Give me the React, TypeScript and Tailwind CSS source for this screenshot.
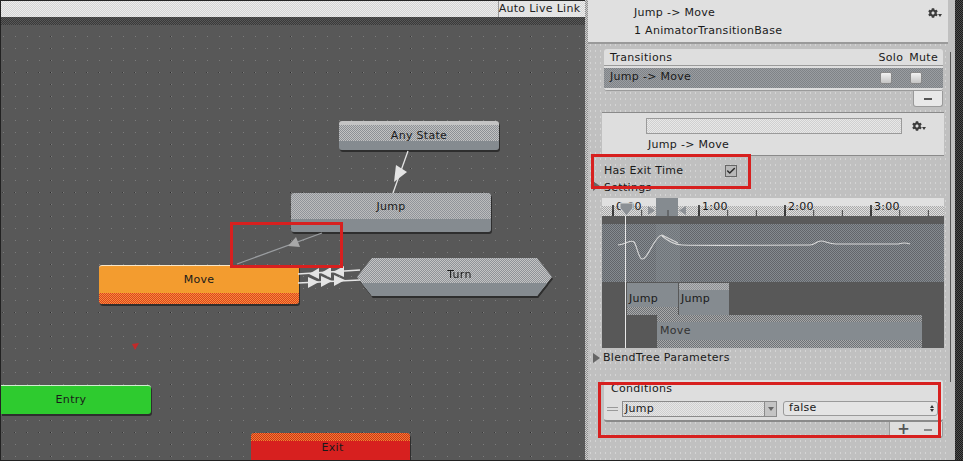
import { FaCog } from "react-icons/fa";
import { Check } from "lucide-react";

const panelDots =
  "bg-[radial-gradient(#f2f2f2_0.6px,transparent_0.7px)] bg-size-[4px_4px]";
const bodyDots =
  "bg-[radial-gradient(#d4d4d4_0.6px,transparent_0.7px)] bg-size-[5px_6px]";

function Gear() {
  return (
    <span className="flex items-end text-[#3c3c3c]">
      <FaCog size={10} />
      <span className="mb-px h-0 w-0 border-x-[2px] border-t-[3px] border-x-transparent border-t-[#3c3c3c]" />
    </span>
  );
}

function SmallCheck() {
  return (
    <span className="block h-3 w-3 rounded-[2px] border border-[#8a8a8a] bg-[linear-gradient(#f2f2f2,#c4c4c4)]" />
  );
}

function StateNode({
  label,
  className,
}: {
  label: string;
  className: string;
}) {
  return (
    <div
      className={`absolute flex items-center justify-center rounded-[3px] shadow-[1px_2px_0_#2e2e2e] ${className}`}
    >
      {label}
    </div>
  );
}

function GraphCanvas() {
  return (
    <div className="relative h-[461px] w-[585px] shrink-0 overflow-hidden border-l border-t border-[#222] bg-[#585858] text-[11px] tracking-[0.3px] text-[#1a1a1a]">
      <div className="flex h-[16px] justify-end bg-[repeating-conic-gradient(#d4d4d4_0_25%,#ececec_0_50%)] bg-size-[2px_2px] pr-[5px]">
        <div className="flex w-[82px] items-center justify-center whitespace-nowrap border-l border-[#9a9a9a] bg-[#e4e4e4] text-[#222]">
          Auto Live Link
        </div>
      </div>
      <div className="h-2 bg-[repeating-conic-gradient(#3a3a3a_0_25%,#585858_0_50%)] bg-size-[2px_2px]" />

      {/* grid */}
      <svg className="absolute -left-px -top-px" width="586" height="462">
        <defs>
          <pattern id="minor" x="3" y="0" width="12" height="12" patternUnits="userSpaceOnUse">
            <rect width="1" height="1" fill="#7c7c7c" />
          </pattern>
          <pattern id="major" x="50" y="72" width="120" height="120" patternUnits="userSpaceOnUse">
            <line x1="0" y1="0" x2="0" y2="120" stroke="#1c1c1c" strokeDasharray="1 11" />
            <line x1="0" y1="0" x2="120" y2="0" stroke="#1c1c1c" strokeDasharray="1 11" />
          </pattern>
        </defs>
        <rect y="25" width="586" height="437" fill="url(#minor)" />
        <rect y="25" width="586" height="437" fill="url(#major)" />
      </svg>

      <StateNode
        label="Any State"
        className="left-[338px] top-[120px] h-[29px] w-[160px] bg-[linear-gradient(#c4c4c4_0_4px,transparent_4px_20px,#858b90_20px),repeating-conic-gradient(#c2c2c2_0_25%,#8c9095_0_50%)] bg-size-[100%_100%,2px_2px] pt-[2px]"
      />
      <StateNode
        label="Jump"
        className="left-[290px] top-[192px] h-[39px] w-[200px] bg-[linear-gradient(transparent_0_26px,#858b90_26px),repeating-conic-gradient(#bcbcbc_0_25%,#90949a_0_50%)] bg-size-[100%_100%,2px_2px] pb-[10px]"
      />
      <StateNode
        label="Move"
        className="left-[98px] top-[264px] h-[39px] w-[200px] border-t border-[#f8e6c8] bg-[linear-gradient(#f39c2f_0_27px,transparent_27px),repeating-conic-gradient(#f39c2f_0_25%,#e0342a_0_50%)] bg-size-[100%_100%,2px_2px] pb-[9px]"
      />
      <StateNode
        label="Entry"
        className="left-0 top-[384px] h-[29px] w-[150px] rounded-l-none border-t border-[#cfeecf] bg-[#2ecb2f] pr-[10px]"
      />
      <StateNode
        label="Exit"
        className="left-[250px] top-[432px] h-[28px] w-[159px] rounded-b-none bg-[linear-gradient(transparent_0_8px,#d7201f_8px),repeating-conic-gradient(#e8902a_0_25%,#d7201f_0_50%)] bg-size-[100%_100%,2px_2px] pl-1 pt-[2px]"
      />
      <div className="absolute left-[356px] top-[257px] h-[38px] w-[195px] drop-shadow-[1px_2px_0_#2e2e2e]">
        <div className="flex h-full items-center justify-center bg-[linear-gradient(transparent_0_25px,#858b90_25px),repeating-conic-gradient(#c4c4c4_0_25%,#8f9398_0_50%)] bg-size-[100%_100%,2px_2px] pb-[3px] pl-[10px] [clip-path:polygon(0_50%,15px_0,calc(100%-15px)_0,100%_50%,calc(100%-15px)_100%,15px_100%)]">
          Turn
        </div>
      </div>

      {/* transitions */}
      <svg className="absolute -left-px -top-px" width="586" height="462">
        <line x1="408" y1="151" x2="393" y2="193" stroke="#e4e4e4" strokeWidth="1.3" />
        <polygon points="396,165 407,172 394,182" fill="#e4e4e4" />
        <line x1="322" y1="233" x2="237" y2="264" stroke="#9a9da0" strokeWidth="1.3" />
        <polygon points="296,237 300,247 288,246" fill="#a8a8a8" />
        <line x1="298" y1="274" x2="360" y2="270" stroke="#e4e4e4" strokeWidth="1.3" />
        <line x1="298" y1="283" x2="360" y2="280" stroke="#e4e4e4" strokeWidth="1.3" />
        <polygon points="309,274 319,268 319,279" fill="#e4e4e4" />
        <polygon points="321,273 331,267 331,278" fill="#e4e4e4" />
        <polygon points="333,272 344,266 344,277" fill="#e4e4e4" />
        <polygon points="308,277 308,288 319,282" fill="#e4e4e4" />
        <polygon points="321,276 321,287 332,281" fill="#e4e4e4" />
        <polygon points="334,275 334,286 345,280" fill="#e4e4e4" />
        <polygon points="132,344 139,343 135,350" fill="#c22a2a" />
      </svg>

      {/* highlight box */}
      <div className="absolute left-[229px] top-[221px] h-[46px] w-[113px] border-[3px] border-[#d7201f]" />
      <div className="absolute bottom-0 left-0 h-px w-full bg-[#222]" />
    </div>
  );
}

function Timeline() {
  const minor = Array.from({ length: 12 }, (_, i) => 11 + i * 28.67);
  const major = [
    { x: 11, label: "0:00" },
    { x: 97, label: "1:00" },
    { x: 183, label: "2:00" },
    { x: 269, label: "3:00" },
  ];
  return (
    <div className="relative mx-[14px] h-[150px] w-[342px] overflow-hidden text-[#1a1a1a]">
      <div className="relative h-[18px] bg-[linear-gradient(#e0e0e0_0_8px,transparent_8px),repeating-conic-gradient(#e0e0e0_0_25%,#a8a8a8_0_50%)] bg-size-[100%_100%,2px_2px]">
        {major.map((m) => (
          <span
            key={m.label}
            className="absolute top-[2px] text-[11px] leading-[13px]"
            style={{ left: m.x + 3 }}
          >
            {m.label}
          </span>
        ))}
        <svg className="absolute inset-0" width="342" height="18">
          {minor.map((x) => (
            <line key={x} x1={x} y1="12" x2={x} y2="18" stroke="#444" />
          ))}
          {major.map((m) => (
            <line key={m.x} x1={m.x} y1="7" x2={m.x} y2="18" stroke="#222" strokeWidth="1.5" />
          ))}
          <rect x="54" width="22" height="18" fill="#858b90" />
          <line x1="66" y1="12" x2="66" y2="18" stroke="#444" />
          <polygon points="46,8 46,17 53,12.5" fill="#8c9095" />
          <polygon points="84,8 84,17 77,12.5" fill="#8c9095" />
          <polygon points="18,5 31,5 31,10 24.5,18 18,10" fill="#8c9095" stroke="#d8d8d8" />
        </svg>
      </div>
      <div className="h-2 bg-[#5a5a5a]" />
      <div className="relative h-[58px] bg-[repeating-conic-gradient(#858b90_0_25%,#62656a_0_50%)] bg-size-[2px_2px]">
        <div className="absolute bottom-0 left-[54px] top-0 w-6 bg-[#858b90]/40" />
        <svg className="absolute inset-0" width="342" height="58">
          <path
            d="M16 21 C 24 21 28 15 32 18 C 35 21 36 34 40 35 C 46 36 52 12 60 11 L 76 19 M60 12 C 66 17 72 21 80 21 C 110 22 150 21 208 21 C 213 21 214 17 219 17 C 224 17 226 20 234 20 L 296 20 C 300 19 302 18 308 20"
            fill="none"
            stroke="#d8d8d8"
            strokeWidth="1.1"
          />
        </svg>
      </div>
      <div className="flex h-[66px] flex-col bg-[#585858] text-[11px]">
        <div className="flex h-[33px] gap-px pl-[25px] pt-px">
          <div className="flex h-[32px] w-[51px] items-center bg-[linear-gradient(#858b90_0_24px,transparent_24px),repeating-conic-gradient(#a8a8a8_0_25%,#6e7276_0_50%)] bg-size-[100%_100%,2px_2px] pl-[2px]">
            Jump
          </div>
          <div className="flex h-[32px] w-[50px] items-center bg-[linear-gradient(transparent_0_7px,#858b90_7px),repeating-conic-gradient(#b4b4b4_0_25%,#8c9095_0_50%)] bg-size-[100%_100%,2px_2px] pl-[2px]">
            Jump
          </div>
        </div>
        <div className="ml-[55px] flex h-[33px] w-[265px] items-center bg-[linear-gradient(transparent_0_7px,#858b90_7px_25px,transparent_25px),repeating-conic-gradient(#a8a8a8_0_25%,#6e7276_0_50%)] bg-size-[100%_100%,2px_2px] pl-[3px] text-[#333]">
          Move
        </div>
      </div>
      <div className="absolute bottom-0 left-[23px] top-[18px] w-px bg-[#e8e8e8]" />
    </div>
  );
}

function Inspector() {
  return (
    <div className="flex h-[461px] w-[378px] shrink-0 bg-[#c0c0c0] text-[11px] tracking-[0.3px] text-[#1a1a1a]">
      <div className="w-[3px] bg-[repeating-conic-gradient(#8f8f8f_0_25%,#cfcfcf_0_50%)] bg-size-[2px_2px]" />
      <div className={`flex h-full w-[360px] flex-col ${bodyDots}`}>
        <div className={`flex h-[44px] flex-col border-b-2 border-[#9a9a9a] bg-[#e0e0e0] pl-[46px] pr-[5px] ${panelDots}`}>
          <div className="flex h-[26px] items-center justify-between pr-[1px]">
            <span>Jump -&gt; Move</span>
            <Gear />
          </div>
          <span className="leading-[10px]">1 AnimatorTransitionBase</span>
        </div>

        <div className="ml-[16px] mt-[5px] w-[339px]">
          <div className="flex h-[16px] items-center justify-between rounded-t-[3px] bg-[#dedede] pl-[6px] pr-[5px] pt-[2px]">
            <span>Transitions</span>
            <span className="flex gap-[6px]">
              <span>Solo</span>
              <span>Mute</span>
            </span>
          </div>
          <div className="border-t border-[#9a9a9a] bg-[#dedede] pt-[2px]">
            <div className="flex h-[20px] items-center justify-between bg-[repeating-conic-gradient(#9a9da1_0_25%,#7f8387_0_50%)] bg-size-[2px_2px] pl-[6px] pr-[21px]">
              <span className="pb-[1px]">Jump -&gt; Move</span>
              <span className="flex gap-[18px]">
                <SmallCheck />
                <SmallCheck />
              </span>
            </div>
          </div>
          <div className="h-[3px] rounded-b-[3px] border-b border-[#9a9a9a] bg-[#dedede]" />
          <div className="ml-auto flex h-[16px] w-[30px] items-center justify-center rounded-b-[3px] border border-t-0 border-[#9a9a9a] bg-[#e8e8e8]">
            <span className="h-[2px] w-2 bg-[#555]" />
          </div>
        </div>

        <div className={`ml-[14px] mt-[5px] flex h-[44px] w-[342px] flex-col border-y border-[#8a8a8a] bg-[#dedede] ${panelDots}`}>
          <div className="mt-[5px] flex items-center gap-[10px] pl-[44px]">
            <div className="h-[16px] w-[256px] border border-[#9a9a9a] bg-[repeating-conic-gradient(#d0d0d0_0_25%,#e8e8e8_0_50%)] bg-size-[2px_2px]" />
            <Gear />
          </div>
          <span className="mt-[3px] pl-[46px] leading-[16px]">Jump -&gt; Move</span>
        </div>

        <div className="mt-[7px] flex h-[16px] items-center pl-[16px]">
          <span className="w-[121px]">Has Exit Time</span>
          <span className="flex h-3 w-3 items-center justify-center border border-[#666] bg-[#b8b8b8]">
            <Check size={12} strokeWidth={3.5} className="text-[#2a2a2a]" />
          </span>
        </div>
        <div className="flex h-[14px] items-center gap-[4px] pl-[5px]">
          <span className="h-0 w-0 border-y-[5px] border-l-[7px] border-y-transparent border-l-[#666]" />
          <span className="pt-[3px] leading-[10px]">Settings</span>
        </div>
        <div className="h-[5px]" />
        <Timeline />
        <div className="mt-[3px] flex h-[14px] items-center gap-[3px] pl-[5px]">
          <span className="h-0 w-0 border-y-[5px] border-l-[7px] border-y-transparent border-l-[#666]" />
          <span>BlendTree Parameters</span>
        </div>
        <div className="ml-[16px] mt-[15px] w-[339px]">
          <div className="flex h-[20px] items-center rounded-t-[3px] bg-[#dedede] pb-[2px] pl-[7px]">
            Conditions
          </div>
          <div className="flex h-[22px] items-start rounded-b-[3px] border-b-2 border-[#8a8a8a] bg-[#dedede] pl-[3px] pt-px">
            <span className="mr-[4px] mt-[6px] h-1 w-[11px] border-y border-[#999]" />
            <div className="flex h-[16px] w-[155px] items-center justify-between border border-[#8a8a8a] bg-[repeating-conic-gradient(#cfcfcf_0_25%,#e6e6e6_0_50%)] bg-size-[2px_2px]">
              <span className="pl-[2px]">Jump</span>
              <span className="flex h-full w-[12px] items-center justify-center border-l border-[#8a8a8a] bg-[#c4c4c4]">
                <span className="h-0 w-0 border-x-[3px] border-t-[4px] border-x-transparent border-t-[#666]" />
              </span>
            </div>
            <div className="ml-[6px] flex h-[15px] w-[155px] items-center justify-between rounded-[3px] border border-[#9a9a9a] bg-[#e4e4e4] pl-[5px] pr-[3px]">
              <span>false</span>
              <span className="flex flex-col gap-px">
                <span className="h-0 w-0 border-x-[2px] border-b-[3px] border-x-transparent border-b-[#333]" />
                <span className="h-0 w-0 border-x-[2px] border-t-[3px] border-x-transparent border-t-[#333]" />
              </span>
            </div>
          </div>
          <div className="ml-auto flex h-[16px] w-[54px] items-center justify-end gap-[14px] rounded-b-[3px] border-x border-b border-[#9a9a9a] bg-[#dedede] pr-[10px]">
            <span className="text-[15px] font-bold leading-none text-[#555]">+</span>
            <span className="h-[2px] w-2 bg-[#888]" />
          </div>
        </div>
      </div>
      <div className="ml-[2px] flex w-[5px] flex-col pt-[52px]">
        <div className="h-[330px] w-px bg-[#555]" />
      </div>
      <div className="w-[8px] bg-[repeating-conic-gradient(#1c1c1c_0_25%,#4a4a4a_0_50%)] bg-size-[2px_2px]" />
    </div>
  );
}

export default function App() {
  return (
    <div className="relative flex h-[461px] w-[963px] overflow-hidden bg-[#585858] font-['DejaVu_Sans',sans-serif]">
      <GraphCanvas />
      <Inspector />
      {/* red callouts over the inspector */}
      <div className="absolute left-[591px] top-[154px] h-[35px] w-[160px] border-[3px] border-[#d7201f]" />
      <div className="absolute left-[598px] top-[382px] h-[56px] w-[343px] border-[3px] border-[#d7201f]" />
      <div className="absolute bottom-0 left-[585px] h-px w-[378px] bg-[#222]" />
    </div>
  );
}
